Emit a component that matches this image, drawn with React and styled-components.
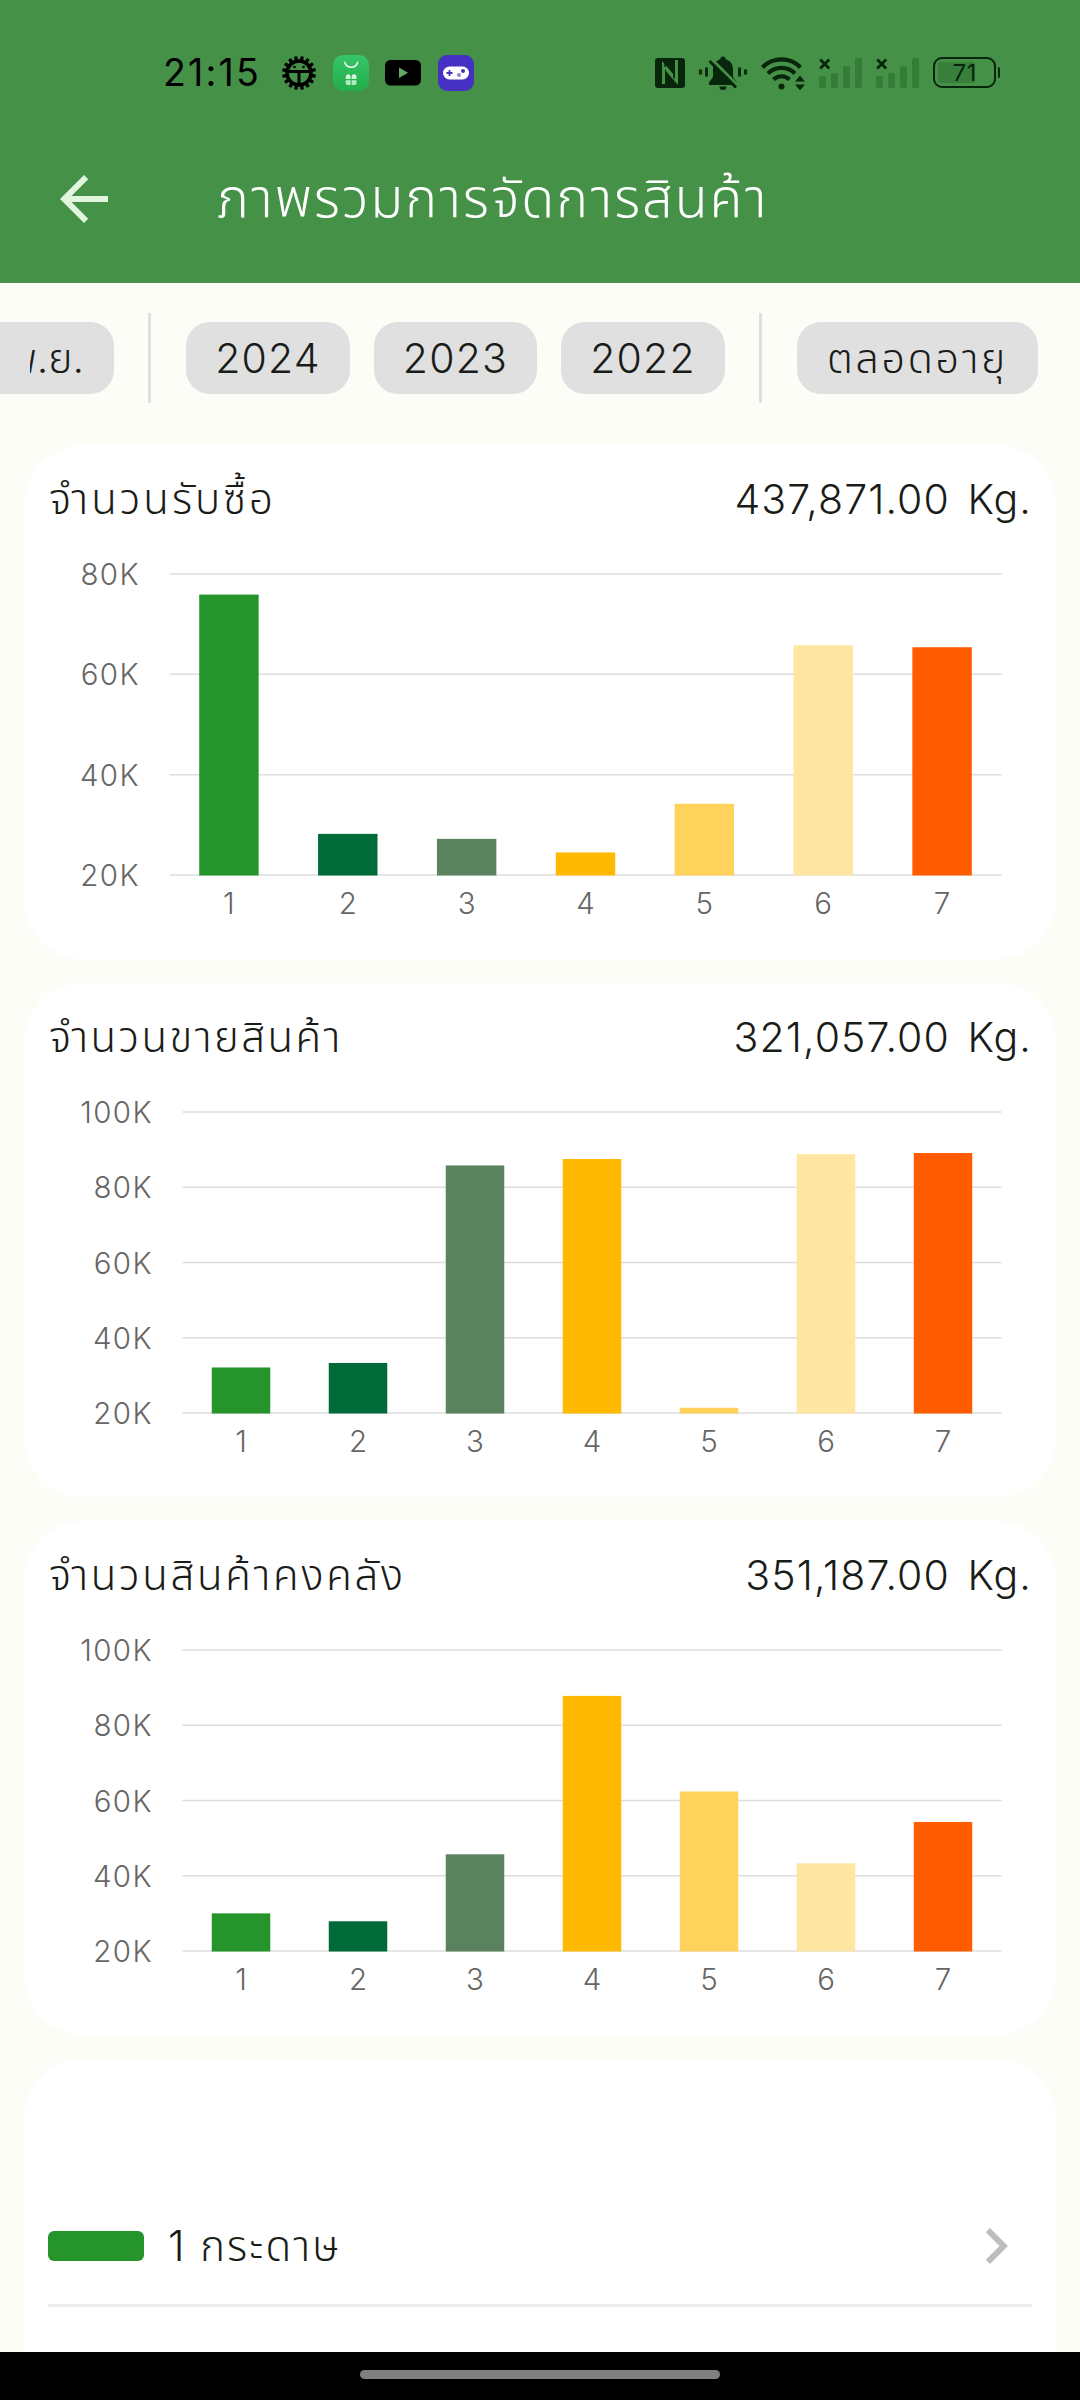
import React from 'react';
import styled, { createGlobalStyle } from 'styled-components';

const GlobalStyle = createGlobalStyle`
  *, *::before, *::after { box-sizing: border-box; }
  html, body { margin: 0; padding: 0; background: #fcfdf7; }
  body { font-family: Inter, "Noto Sans Thai", "Noto Sans", sans-serif; font-weight: 300; color: #1a1c19; }
`;

const Screen = styled.div`
  width: 1080px;
  height: 2400px;
  display: flex;
  flex-direction: column;
  overflow: hidden;
  background: #fcfdf7;
`;

const Header = styled.header`
  flex: none;
  height: 283px;
  background: #469148;
  display: flex;
  flex-direction: column;
`;

const StatusBar = styled.div`
  height: 115px;
  padding: 30px 80px 0 163px;
  display: flex;
  align-items: center;
  justify-content: space-between;
  color: #07260b;
`;

const StatusGroup = styled.div`
  display: flex;
  align-items: center;
  gap: ${(p) => p.$gap}px;
`;

const Clock = styled.span`
  width: 103px;
  font-family: Inter, Roboto, sans-serif;
  font-size: 37.5px;
  font-weight: 400;
  line-height: 40px;
  letter-spacing: 2.2px;
  color: #000;
  white-space: nowrap;
`;

const AppBar = styled.div`
  height: 168px;
  padding: 0 48px;
  display: flex;
  align-items: center;
  gap: 97px;
  color: #e2f6de;
`;

const Title = styled.h1`
  margin: 0;
  padding-bottom: 2px;
  font-size: 54px;
  line-height: 72px;
  font-weight: 300;
  color: #fff;
  white-space: nowrap;
  letter-spacing: 2px;
`;

const Filters = styled.nav`
  flex: none;
  height: 150px;
  display: flex;
  align-items: center;
  padding-right: 42px;
`;

const ChipGroup = styled.div`
  display: flex;
  gap: 24px;
`;

const Chip = styled.button`
  width: ${(p) => p.$width}px;
  height: 72px;
  border: 0;
  padding: 0 ${(p) => (p.$clipped ? 30 : 0)}px;
  border-radius: ${(p) => (p.$clipped ? '0 24px 24px 0' : '24px')};
  background: #e0e0e0;
  color: inherit;
  font: inherit;
  font-size: 41px;
  line-height: 72px;
  letter-spacing: ${(p) => p.$track || 0}px;
  display: flex;
  justify-content: ${(p) => (p.$clipped ? 'flex-end' : 'center')};
  white-space: nowrap;
`;

const ChipClip = styled.span`
  display: flex;
  justify-content: flex-end;
  width: 54px;
  overflow: hidden;
`;

const FilterDivider = styled.span`
  width: 3px;
  height: 90px;
  margin: 0 35px 0 34px;
  background: #e0e0e0;
`;

const Content = styled.main`
  flex: 1;
  min-height: 0;
  overflow: hidden;
  display: flex;
  flex-direction: column;
  gap: 24px;
  padding: 12px 24px 0;
`;

const Card = styled.section`
  flex: none;
  height: 514px;
  padding: 0 24px;
  border-radius: 60px;
  background: #fff;
`;

const CardHeader = styled.div`
  height: 96px;
  padding-top: 12px;
  display: flex;
  align-items: center;
  justify-content: space-between;
`;

const CardTitle = styled.h2`
  margin: 0;
  padding-left: 1px;
  font-size: 42px;
  line-height: 60px;
  font-weight: 300;
  white-space: nowrap;
  letter-spacing: ${(p) => p.$track}px;
`;

const CardValue = styled.span`
  font-size: 41px;
  line-height: 60px;
  word-spacing: 5px;
  letter-spacing: 1.1px;
  white-space: nowrap;
`;

const ChartSvg = styled.svg`
  display: block;
  width: 984px;
  height: 418px;
  overflow: visible;
`;

const AxisLabel = styled.text`
  font-size: 29.5px;
  letter-spacing: ${(p) => p.$track || 0}px;
  fill: #666;
`;

const ListCard = styled.section`
  flex: none;
  height: 420px;
  padding: 115px 24px 0;
  border-radius: 60px;
  background: #fff;
`;

const ListRow = styled.div`
  height: 133px;
  display: flex;
  align-items: center;
  gap: 24px;
  border-bottom: 3px solid #ececec;
  padding-top: 14px;
`;

const Swatch = styled.span`
  width: 96px;
  height: 30px;
  border-radius: 6px;
  background: ${(p) => p.$color};
`;

const RowLabel = styled.span`
  flex: 1;
  font-size: 42px;
  line-height: 60px;
  white-space: nowrap;
  letter-spacing: 2px;
`;

const NavBar = styled.footer`
  flex: none;
  height: 48px;
  padding-top: 18px;
  background: #000;
  display: flex;
  justify-content: center;
`;

const NavHandle = styled.span`
  width: 360px;
  height: 9px;
  border-radius: 5px;
  background: #808080;
`;

const COLORS = ['#25942b', '#006b38', '#5a825f', '#ffb900', '#ffd25c', '#ffe6a3', '#ff5c00'];

function Chart({ values, max, left }) {
  const top = 33;
  const height = 301;
  const right = 953.5;
  const step = (right - left) / values.length;
  const y = (v) => top + ((max - v) / (max - 20)) * height;
  const ticks = [];
  for (let t = max; t >= 20; t -= 20) ticks.push(t);
  return (
    <ChartSvg viewBox="0 0 984 418">
      {ticks.map((t) => (
        <g key={t}>
          <line x1={left} x2={right} y1={y(t)} y2={y(t)} stroke="#dedede" strokeWidth="1.5" />
          <AxisLabel $track={1.4} x={left - 29.5} y={y(t) + 11} textAnchor="end">{t}K</AxisLabel>
        </g>
      ))}
      {values.map((v, i) => (
        <g key={i}>
          <rect x={left + step * (i + 0.25)} y={y(v)} width={step / 2} height={y(20) - y(v) + 0.5} fill={COLORS[i]} />
          <AxisLabel x={left + step * (i + 0.5)} y={373} textAnchor="middle">{i + 1}</AxisLabel>
        </g>
      ))}
    </ChartSvg>
  );
}

const CARDS = [
  { title: 'จำนวนรับซื้อ', track: 3, value: '437,871.00 Kg.', max: 80, left: 121.5, values: [75.9, 28.2, 27.2, 24.5, 34.2, 65.8, 65.4] },
  { title: 'จำนวนขายสินค้า', track: 2.4, value: '321,057.00 Kg.', max: 100, left: 134.5, values: [32.1, 33.3, 85.8, 87.5, 21.4, 88.8, 89.1] },
  { title: 'จำนวนสินค้าคงคลัง', track: 2.65, value: '351,187.00 Kg.', max: 100, left: 134.5, values: [30, 27.9, 45.7, 87.8, 62.4, 43.3, 54.3] },
];

function GearIcon() {
  return (
    <svg width="34" height="34" viewBox="-17 -17 34 34">
      {Array.from({ length: 16 }, (_, i) => (
        <rect key={i} x="-1.7" y="-17" width="3.4" height="5" rx="1" transform={`rotate(${i * 22.5 + 11})`} fill="#000" />
      ))}
      <circle r="12" fill="none" stroke="#000" strokeWidth="3.6" />
      <path d="M-12 -1.5H12M0 -1V12" stroke="#000" strokeWidth="3" />
      <circle cx="-4.5" cy="-6" r="1.3" fill="#000" />
      <circle cx="4.5" cy="-6" r="1.3" fill="#000" />
    </svg>
  );
}

function StoreIcon() {
  return (
    <svg width="36" height="36" viewBox="0 0 36 36">
      <defs>
        <linearGradient id="store" x1="0" y1="0" x2="0" y2="1">
          <stop offset="0" stopColor="#36c568" />
          <stop offset="1" stopColor="#23ad4b" />
        </linearGradient>
      </defs>
      <rect width="36" height="36" rx="10" fill="url(#store)" />
      <path d="M11.800 7.200a6.600 6.600 0 0 0 12.800 0" fill="none" stroke="#e4f9e8" strokeWidth="1.600" strokeLinecap="round" />
      <path d="M12.800 24v-2.300a2.400 2.400 0 0 1 4.800 0v2.300zM18.700 24v-2.300a2.400 2.400 0 0 1 4.800 0v2.300z" fill="#d5f5dc" />
      <path d="M12.800 25.200h4.800v4.800h-3a1.800 1.800 0 0 1-1.800-1.800zM18.700 25.200h4.800v3a1.800 1.800 0 0 1-1.800 1.800h-3z" fill="#b4ebc0" />
    </svg>
  );
}

function VideoIcon() {
  return (
    <svg width="36" height="26" viewBox="0 0 36 26">
      <rect width="36" height="25.500" rx="5.500" fill="#000" />
      <path d="M14 7.500v10.500l9-5.250z" fill="#63a765" />
    </svg>
  );
}

function GameIcon() {
  return (
    <svg width="36" height="36" viewBox="0 0 36 36">
      <rect width="36" height="36" rx="9" fill="#4632c2" />
      <rect x="5" y="11.500" width="26" height="13" rx="6.500" fill="#fff" />
      <path d="M8.500 18h6M11.500 15v6" stroke="#4632c2" strokeWidth="1.800" />
      <circle cx="25" cy="16" r="2" fill="#4632c2" />
      <circle cx="21" cy="20" r="2" fill="#8c7fe0" />
    </svg>
  );
}

function NfcIcon() {
  return (
    <svg width="30" height="30" viewBox="0 0 30 30">
      <rect width="30" height="30" rx="3" fill="currentColor" />
      <g fill="none" stroke="#469148" strokeWidth="3">
        <path d="M8.500 26V7l9.500 11" />
        <path d="M21.500 2v21L12 12" />
      </g>
      <path d="M10.200 8.800V5l8.800 9.500v6" fill="none" stroke="currentColor" strokeWidth="1.600" />
    </svg>
  );
}

function BellOffIcon() {
  return (
    <svg width="48" height="34" viewBox="0 0 48 34">
      <path d="M24 0.500a2.600 2.600 0 0 1 2.600 2.700C31 4.500 34 8 34 13v8l4 5.500v2.500H10v-2.500l4-5.500v-8c0-5 3-8.500 7.400-9.800A2.600 2.600 0 0 1 24 .5z" fill="currentColor" />
      <path d="M20.500 30.500h7a3.500 3.500 0 0 1-7 0z" fill="currentColor" />
      <path d="M12.500 3L40 30.500" stroke="#469148" strokeWidth="3" />
      <path d="M10.500 5L37 31.500" stroke="currentColor" strokeWidth="3" />
      <path d="M1.500 13.500v5M46.500 13.500v5M7.500 11.500v9M40.500 11.500v9" stroke="currentColor" strokeWidth="2.800" />
    </svg>
  );
}

function WifiIcon() {
  return (
    <svg width="45" height="34" viewBox="0 0 45 34">
      <g fill="none" stroke="currentColor" strokeWidth="4.200">
        <path d="M1.500 11.500a26.500 26.500 0 0 1 38 0" />
        <path d="M7 17.500a19 19 0 0 1 27 0" />
        <path d="M12.500 23.500a11.500 11.500 0 0 1 16 0" />
      </g>
      <circle cx="20.500" cy="30.500" r="3" fill="currentColor" />
      <path d="M34 25.500l5-6 5 6zM34 28.500l5 6 5-6z" fill="currentColor" />
    </svg>
  );
}

function SignalIcon() {
  return (
    <svg width="43" height="30" viewBox="0 0 43 30">
      <g fill="#357c39">
        <rect x="0" y="18" width="7" height="12" rx="2" />
        <rect x="12" y="15" width="7" height="15" rx="2" />
        <rect x="24" y="8" width="7" height="22" rx="2" />
        <rect x="36" y="0" width="7" height="30" rx="2" />
      </g>
      <path d="M1.200 1.500l9 9M10.200 1.500l-9 9" stroke="currentColor" strokeWidth="2.800" />
    </svg>
  );
}

const BatteryShell = styled.span`
  display: flex;
  align-items: center;
  gap: 1.5px;
  &::after {
    content: '';
    width: 2.5px;
    height: 11px;
    border-radius: 0 2px 2px 0;
    background: currentColor;
  }
`;

const BatteryBody = styled.span`
  width: 63px;
  height: 31px;
  border: 2px solid currentColor;
  border-radius: 9px;
  padding-left: 1px;
  display: flex;
  align-items: center;
  justify-content: center;
  background: linear-gradient(#387f3c, #387f3c) 3px 50% / 37px 21px no-repeat;
  font-family: Inter, Roboto, sans-serif;
  font-size: 23.5px;
  font-weight: 400;
  line-height: 27px;
  letter-spacing: 0.8px;
`;

export default function App() {
  return (
    <>
      <GlobalStyle />
      <Screen>
        <Header>
          <StatusBar>
            <StatusGroup $gap={16.4}>
              <Clock>21:15</Clock>
              <GearIcon />
              <StoreIcon />
              <VideoIcon />
              <GameIcon />
            </StatusGroup>
            <StatusGroup $gap={13.8}>
              <NfcIcon />
              <BellOffIcon />
              <WifiIcon />
              <SignalIcon />
              <SignalIcon />
              <BatteryShell><BatteryBody>71</BatteryBody></BatteryShell>
            </StatusGroup>
          </StatusBar>
          <AppBar>
            <svg width="72" height="72" viewBox="0 0 24 24" fill="currentColor">
              <path d="M20 11H7.830l5.590-5.590L12 4l-8 8 8 8 1.410-1.410L7.830 13H20v-2z" />
            </svg>
            <Title>ภาพรวมการจัดการสินค้า</Title>
          </AppBar>
        </Header>
        <Filters>
          <Chip $width={114} $clipped><ChipClip>พ.ย.</ChipClip></Chip>
          <FilterDivider />
          <ChipGroup>
            <Chip $width={164} $track={1.2}>2024</Chip>
            <Chip $width={163} $track={1.2}>2023</Chip>
            <Chip $width={164} $track={1.2}>2022</Chip>
          </ChipGroup>
          <FilterDivider />
          <Chip $width={241} $track={2.8}>ตลอดอายุ</Chip>
        </Filters>
        <Content>
          {CARDS.map((c) => (
            <Card key={c.title}>
              <CardHeader>
                <CardTitle $track={c.track}>{c.title}</CardTitle>
                <CardValue>{c.value}</CardValue>
              </CardHeader>
              <Chart values={c.values} max={c.max} left={c.left} />
            </Card>
          ))}
          <ListCard>
            <ListRow>
              <Swatch $color="#25942b" />
              <RowLabel>1 กระดาษ</RowLabel>
              <svg width="72" height="72" viewBox="0 0 24 24" fill="#bdbdbd">
                <path d="M10 6L8.590 7.410 13.170 12l-4.580 4.590L10 18l6-6z" />
              </svg>
            </ListRow>
          </ListCard>
        </Content>
        <NavBar><NavHandle /></NavBar>
      </Screen>
    </>
  );
}
